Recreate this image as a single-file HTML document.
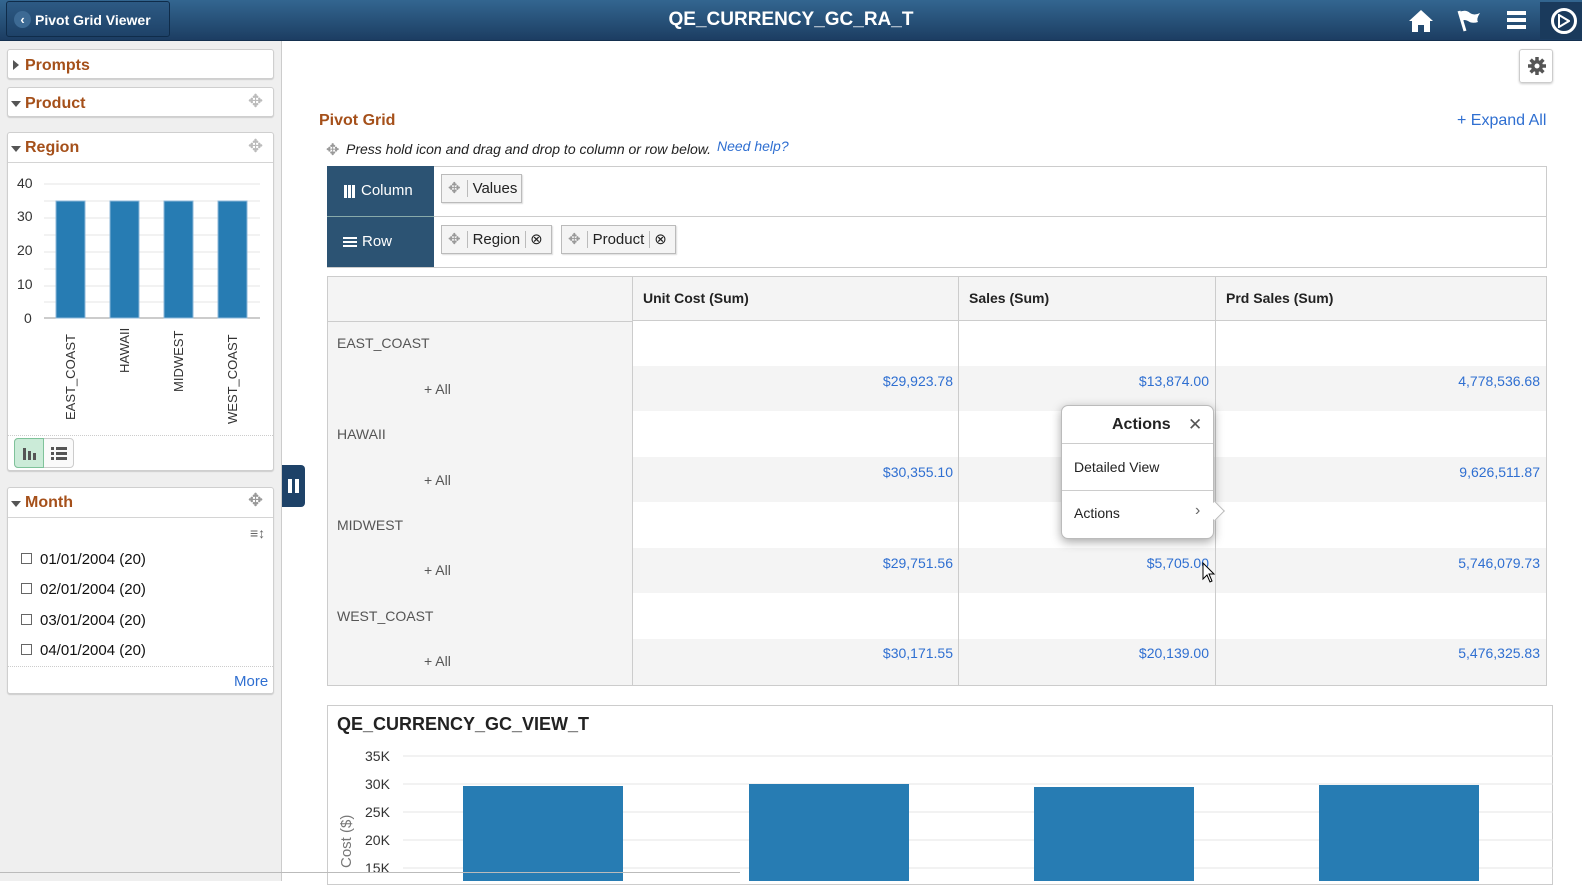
<!DOCTYPE html>
<html><head><meta charset="utf-8"><style>
*{box-sizing:border-box;margin:0;padding:0}
body{width:1582px;height:881px;overflow:hidden;font-family:"Liberation Sans",Arial,sans-serif;background:#fff;position:relative;font-size:14px;color:#222}
.a{position:absolute}
.hdr{left:0;top:0;width:1582px;height:41px;background:linear-gradient(#336690,#1c3d62);border-bottom:1px solid #14304f}
.back{left:6px;top:1px;width:164px;height:36px;border:1px solid #0f2c4a;border-radius:3px;background:linear-gradient(#2d5a84,#1e4268);color:#fff;font-weight:bold;font-size:14px;line-height:36px;padding-left:28px}
.title{left:0;width:1582px;top:9px;text-align:center;color:#fff;font-weight:bold;font-size:19px}
.left{left:0;top:41px;width:282px;height:840px;background:#efefef;border-right:1px solid #ccc}
.box{background:#fff;border:1px solid #cfcfcf;border-radius:3px;box-shadow:0 1px 1px #ccc}
.ph{color:#a5501a;font-weight:bold;font-size:16px}
.tri{width:0;height:0;border-left:5px solid transparent;border-right:5px solid transparent;border-top:6px solid #555}
.trir{width:0;height:0;border-top:5px solid transparent;border-bottom:5px solid transparent;border-left:6px solid #555}
.mv{color:#bbb;font-size:18px}
.blue{color:#2f6fd1}
.cell{position:absolute;font-size:14px}
.chip{position:absolute;height:29px;border:1px solid #bbb;background:#f4f4f4;box-shadow:1px 1px 1px #ddd;font-size:15px;line-height:27px}
</style></head><body>
<div class="a hdr"></div>
<div class="a back"><span class="a" style="left:7px;top:9px;width:17px;height:17px;border-radius:50%;background:#3d6a94;color:#fff;font-size:13px;line-height:17px;text-align:center">&#8249;</span>Pivot Grid Viewer</div>
<div class="a title">QE_CURRENCY_GC_RA_T</div>
<svg class="a" style="left:1408px;top:9px" width="26" height="24" viewBox="0 0 26 24"><path d="M13 1 L1 12 L4 12 L4 23 L10 23 L10 16 L16 16 L16 23 L22 23 L22 12 L25 12 Z" fill="#fff"/></svg>
<svg class="a" style="left:1456px;top:9px" width="26" height="24" viewBox="0 0 26 24"><path d="M3 2 L9 22" stroke="#fff" stroke-width="3"/><path d="M3 3 Q10 0 14 4 Q18 7 24 4 Q20 10 22 13 Q16 15 12 12 Q8 10 6 12 Z" fill="#fff"/></svg>
<div class="a" style="left:1507px;top:11px;width:19px;height:4px;background:#fff;box-shadow:0 7px 0 #fff,0 14px 0 #fff"></div>
<div class="a" style="left:1540px;top:2px;width:42px;height:37px;background:#1a3a5c"></div>
<div class="a" style="left:1551px;top:8px;width:26px;height:26px;border:3px solid #fff;border-radius:50%"></div>
<svg class="a" style="left:1558px;top:14px" width="12" height="14"><path d="M1 1 L11 7 L1 13 Z" fill="none" stroke="#fff" stroke-width="2"/></svg>

<div class="a left"></div>
<div class="a box" style="left:7px;top:49px;width:267px;height:30px"><div class="a trir" style="left:5px;top:10px"></div><span class="a ph" style="left:17px;top:7px">Prompts</span></div>
<div class="a box" style="left:7px;top:87px;width:267px;height:30px"><div class="a tri" style="left:3px;top:13px"></div><span class="a ph" style="left:17px;top:7px">Product</span><span class="a mv" style="left:240px;top:3px">✥</span></div>
<div class="a box" style="left:7px;top:132px;width:267px;height:339px">
<div class="a tri" style="left:3px;top:13px"></div><span class="a ph" style="left:17px;top:6px">Region</span><span class="a mv" style="left:240px;top:3px">✥</span>
<div class="a" style="left:0;top:29px;width:265px;border-top:1px solid #d4d4d4"></div>
<div class="a" style="left:0;top:302px;width:265px;border-top:1px dotted #ccc"></div>
<div class="a" style="left:6px;top:305px;width:60px;height:30px;border:1px solid #ccc;border-radius:4px;background:#fafafa"></div>
<div class="a" style="left:6px;top:305px;width:30px;height:30px;border:1px solid #7fc29a;border-radius:4px 0 0 4px;background:#cbebd8"></div>
<svg class="a" style="left:14px;top:313px" width="16" height="15"><rect x="1" y="2" width="3" height="12" fill="#555"/><rect x="6" y="5" width="3" height="9" fill="#555"/><rect x="11" y="7" width="3" height="7" fill="#555"/></svg>
<svg class="a" style="left:42px;top:313px" width="18" height="15"><g fill="#555"><rect x="1" y="1" width="3" height="3"/><rect x="6" y="1" width="11" height="3"/><rect x="1" y="6" width="3" height="3"/><rect x="6" y="6" width="11" height="3"/><rect x="1" y="11" width="3" height="3"/><rect x="6" y="11" width="11" height="3"/></g></svg>
</div>
<svg class="a" style="left:8px;top:170px" width="265" height="260" font-family="Liberation Sans,Arial" font-size="14" fill="#333">
<g stroke="#e6e6e6"><line x1="36" y1="14" x2="252" y2="14"/><line x1="36" y1="31" x2="252" y2="31"/><line x1="36" y1="48" x2="252" y2="48"/><line x1="36" y1="65" x2="252" y2="65"/><line x1="36" y1="82" x2="252" y2="82"/><line x1="36" y1="99" x2="252" y2="99"/><line x1="36" y1="116" x2="252" y2="116"/><line x1="36" y1="132" x2="252" y2="132"/></g>
<line x1="36" y1="148" x2="252" y2="148" stroke="#999"/>
<text x="9" y="18">40</text><text x="9" y="51">30</text><text x="9" y="85">20</text><text x="9" y="119">10</text><text x="16" y="153">0</text>
<g fill="#277cb3" stroke="#8cb7d8"><rect x="48" y="31" width="29" height="117"/><rect x="102" y="31" width="29" height="117"/><rect x="156" y="31" width="29" height="117"/><rect x="210" y="31" width="29" height="117"/></g>
<g font-size="13"><text transform="translate(67,250) rotate(-90)">EAST_COAST</text><text transform="translate(121,203) rotate(-90)">HAWAII</text><text transform="translate(175,222) rotate(-90)">MIDWEST</text><text transform="translate(229,254) rotate(-90)">WEST_COAST</text></g>
</svg>
<div class="a box" style="left:7px;top:487px;width:267px;height:207px">
<div class="a tri" style="left:3px;top:13px"></div><span class="a ph" style="left:17px;top:6px">Month</span><span class="a" style="left:240px;top:2px;color:#999;font-size:18px">✥</span>
<div class="a" style="left:0;top:29px;width:265px;border-top:1px solid #d4d4d4"></div>
<span class="a" style="left:242px;top:37px;color:#666;font-size:14px">≡↕</span>
<div class="a" style="left:0;top:178px;width:265px;border-top:1px dotted #ccc"></div>
<span class="a blue" style="left:226px;top:185px;font-size:15px">More</span>
</div>
<div class="a" style="left:21px;top:545px;font-size:15px;line-height:30.3px;color:#111">
<div><span style="display:inline-block;width:11px;height:11px;border:1px solid #666;margin-right:8px"></span>01/01/2004 (20)</div>
<div><span style="display:inline-block;width:11px;height:11px;border:1px solid #666;margin-right:8px"></span>02/01/2004 (20)</div>
<div><span style="display:inline-block;width:11px;height:11px;border:1px solid #666;margin-right:8px"></span>03/01/2004 (20)</div>
<div><span style="display:inline-block;width:11px;height:11px;border:1px solid #666;margin-right:8px"></span>04/01/2004 (20)</div>
</div>
<div class="a" style="left:282px;top:465px;width:23px;height:42px;background:#1e4268;border-radius:0 4px 4px 0"><div class="a" style="left:6px;top:14px;width:4px;height:14px;background:#fff"></div><div class="a" style="left:13px;top:14px;width:4px;height:14px;background:#fff"></div></div>

<div class="a" style="left:1519px;top:49px;width:34px;height:34px;border:1px solid #ccc;border-radius:3px;box-shadow:0 1px 2px #ccc"></div>
<svg class="a" style="left:1527px;top:56px" width="20" height="20" viewBox="0 0 20 20"><g fill="#555"><circle cx="10" cy="10" r="6"/><g stroke="#555" stroke-width="3.5"><line x1="10" y1="1" x2="10" y2="19"/><line x1="1" y1="10" x2="19" y2="10"/><line x1="3.6" y1="3.6" x2="16.4" y2="16.4"/><line x1="16.4" y1="3.6" x2="3.6" y2="16.4"/></g></g><circle cx="10" cy="10" r="2.5" fill="#fff"/></svg>
<span class="a" style="left:319px;top:112px;color:#a5501a;font-weight:bold;font-size:16px">Pivot Grid</span>
<span class="a blue" style="left:1457px;top:112px;font-size:16px">+ Expand All</span>
<span class="a" style="left:326px;top:140px;color:#999;font-size:16px">✥</span>
<span class="a" style="left:346px;top:141px;font-style:italic;font-size:14px">Press hold icon and drag and drop to column or row below.</span>
<span class="a blue" style="left:717px;top:138px;font-style:italic;font-size:14px">Need help?</span>

<div class="a" style="left:327px;top:166px;width:1220px;height:102px;border:1px solid #ccc"></div>
<div class="a" style="left:327px;top:216px;width:1220px;border-top:1px solid #ccc"></div>
<div class="a" style="left:327px;top:166px;width:107px;height:101px;background:#2c5373"></div>
<div class="a" style="left:327px;top:216px;width:107px;border-top:1px solid #8aa"></div>
<div class="a" style="left:344px;top:185px;width:3px;height:13px;background:#fff;box-shadow:4px 0 0 #fff,8px 0 0 #fff"></div>
<span class="a" style="left:361px;top:182px;color:#fff;font-size:15px">Column</span>
<div class="a" style="left:343px;top:237px;width:14px;height:2px;background:#fff;box-shadow:0 4px 0 #fff,0 8px 0 #fff"></div>
<span class="a" style="left:362px;top:233px;color:#fff;font-size:15px">Row</span>
<div class="chip" style="left:441px;top:174px;width:81px"><span style="color:#999;padding:0 6px">✥</span><span style="border-left:1px solid #bbb;padding-left:5px">Values</span></div>
<div class="chip" style="left:441px;top:225px;width:111px"><span style="color:#999;padding:0 6px">✥</span><span style="border-left:1px solid #bbb;padding:0 5px">Region</span><span style="border-left:1px solid #bbb;padding-left:4px">⊗</span></div>
<div class="chip" style="left:561px;top:225px;width:115px"><span style="color:#999;padding:0 6px">✥</span><span style="border-left:1px solid #bbb;padding:0 5px">Product</span><span style="border-left:1px solid #bbb;padding-left:4px">⊗</span></div>

<div class="a" style="left:327px;top:276px;width:1220px;height:410px;border:1px solid #ccc;background:#fff"></div>
<div class="a" style="left:328px;top:277px;width:304px;height:408px;background:#f4f4f4"></div>
<div class="a" style="left:632px;top:277px;width:914px;height:44px;background:#f4f4f4;border-bottom:1px solid #ccc"></div>
<div class="a" style="left:328px;top:321px;width:304px;border-top:1px solid #ccc"></div>
<div class="a" style="left:632px;top:366px;width:914px;height:45px;background:#f4f4f4"></div>
<div class="a" style="left:632px;top:457px;width:914px;height:45px;background:#f4f4f4"></div>
<div class="a" style="left:632px;top:548px;width:914px;height:45px;background:#f4f4f4"></div>
<div class="a" style="left:632px;top:639px;width:914px;height:46px;background:#f4f4f4"></div>
<div class="a" style="left:632px;top:277px;height:408px;border-left:1px solid #ccc"></div>
<div class="a" style="left:958px;top:277px;height:408px;border-left:1px solid #ccc"></div>
<div class="a" style="left:1215px;top:277px;height:408px;border-left:1px solid #ccc"></div>
<b class="cell" style="left:643px;top:290px">Unit Cost (Sum)</b>
<b class="cell" style="left:969px;top:290px">Sales (Sum)</b>
<b class="cell" style="left:1226px;top:290px">Prd Sales (Sum)</b>
<div style="color:#555">
<span class="cell" style="left:337px;top:335px">EAST_COAST</span><span class="cell" style="left:424px;top:381px">+ All</span>
<span class="cell" style="left:337px;top:426px">HAWAII</span><span class="cell" style="left:424px;top:472px">+ All</span>
<span class="cell" style="left:337px;top:517px">MIDWEST</span><span class="cell" style="left:424px;top:562px">+ All</span>
<span class="cell" style="left:337px;top:608px">WEST_COAST</span><span class="cell" style="left:424px;top:653px">+ All</span>
</div>
<div class="blue">
<span class="cell" style="right:629px;top:373px">$29,923.78</span><span class="cell" style="right:373px;top:373px">$13,874.00</span><span class="cell" style="right:42px;top:373px">4,778,536.68</span>
<span class="cell" style="right:629px;top:464px">$30,355.10</span><span class="cell" style="right:42px;top:464px">9,626,511.87</span>
<span class="cell" style="right:629px;top:555px">$29,751.56</span><span class="cell" style="right:373px;top:555px">$5,705.00</span><span class="cell" style="right:42px;top:555px">5,746,079.73</span>
<span class="cell" style="right:629px;top:645px">$30,171.55</span><span class="cell" style="right:373px;top:645px">$20,139.00</span><span class="cell" style="right:42px;top:645px">5,476,325.83</span>
</div>

<div class="a" style="left:1061px;top:405px;width:153px;height:134px;background:#fff;border:1px solid #bbb;border-radius:7px;box-shadow:0 3px 10px rgba(0,0,0,.35)">
<b class="a" style="left:50px;top:10px;font-size:16px">Actions</b><span class="a" style="left:126px;top:9px;font-size:17px;color:#555">✕</span>
<div class="a" style="left:0;top:37px;width:151px;border-top:1px solid #ccc"></div>
<span class="a" style="left:12px;top:53px">Detailed View</span>
<div class="a" style="left:0;top:84px;width:151px;border-top:1px solid #ccc"></div>
<span class="a" style="left:12px;top:99px">Actions</span><span class="a" style="left:133px;top:96px;color:#666;font-size:16px">›</span>
</div>
<div class="a" style="left:1208px;top:504px;width:14px;height:14px;background:#fff;transform:rotate(45deg);border-right:1px solid #bbb;border-top:1px solid #bbb"></div>
<svg class="a" style="left:1202px;top:562px" width="14" height="22"><path d="M1 1 L1 17 L5 13 L8 20 L10 19 L7 12 L12 12 Z" fill="#fff" stroke="#000"/></svg>

<div class="a" style="left:327px;top:705px;width:1226px;height:180px;border:1px solid #ccc"></div>
<b class="a" style="left:337px;top:714px;font-size:18px;color:#222">QE_CURRENCY_GC_VIEW_T</b>
<svg class="a" style="left:327px;top:740px" width="1226" height="141" font-family="Liberation Sans,Arial" font-size="14" fill="#333">
<g stroke="#e6e6e6"><line x1="76" y1="16" x2="1226" y2="16"/><line x1="76" y1="44" x2="1226" y2="44"/><line x1="76" y1="72" x2="1226" y2="72"/><line x1="76" y1="100" x2="1226" y2="100"/><line x1="76" y1="128" x2="1226" y2="128"/></g>
<text x="38" y="21">35K</text><text x="38" y="49">30K</text><text x="38" y="77">25K</text><text x="38" y="105">20K</text><text x="38" y="133">15K</text>
<text transform="translate(24,128) rotate(-90)" fill="#777" font-size="15">Cost ($)</text>
<g fill="#277cb3"><rect x="136" y="46" width="160" height="100"/><rect x="422" y="44" width="160" height="100"/><rect x="707" y="47" width="160" height="100"/><rect x="992" y="45" width="160" height="100"/></g>
</svg>
<div class="a" style="left:0;top:872px;width:740px;border-top:1px solid #bbb"></div>
</body></html>
